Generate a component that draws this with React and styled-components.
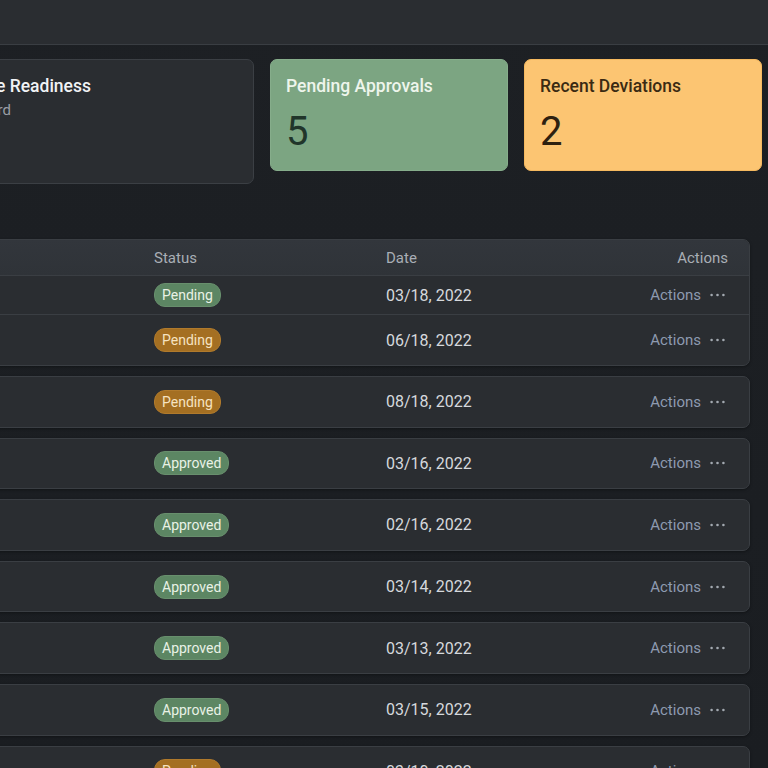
import React from "react";
import styled, { createGlobalStyle } from "styled-components";

const GlobalStyle = createGlobalStyle`
  html, body { margin: 0; padding: 0; }
  body {
    background: #1c1f23;
    font-family: Roboto, "Noto Sans", "Liberation Sans", sans-serif;
    overflow: hidden;
  }
`;

const Viewport = styled.div`
  width: 768px;
  height: 768px;
  overflow: hidden;
  background: linear-gradient(180deg, #1d2024 0%, #1a1d21 100%);
`;

const TopBar = styled.header`
  height: 44px;
  background: #2a2d31;
  border-bottom: 1px solid #3a3e43;
`;

const Main = styled.main`
  padding-top: 14px;
`;

const Cards = styled.section`
  display: grid;
  grid-template-columns: 492px 238px 238px;
  gap: 16px;
  align-items: start;
  margin-left: -238px;
`;

const Card = styled.div`
  box-sizing: border-box;
  border-radius: 7px;
  padding: 14px 15px;
  height: ${(p) => p.$h}px;
  background: ${(p) => p.$bg};
  border: 1px solid ${(p) => p.$border};
  color: ${(p) => p.$fg};
`;

const IntroCard = styled(Card)`
  text-align: right;
  padding-right: 162px;
`;

const CardTitle = styled.div`
  font-size: 17.5px;
  font-weight: 500;
  line-height: 22px;
  margin-top: 1px;
`;

const CardSub = styled.div`
  font-size: 15px;
  line-height: 20px;
  margin-top: 3px;
  margin-right: 80px;
  color: #9a9fa6;
`;

const CardNumber = styled.div`
  font-size: 40px;
  line-height: 44px;
  margin-top: 13px;
  font-weight: 400;
  color: ${(p) => p.$c};
`;

const TableArea = styled.section`
  margin-top: 55px;
  margin-left: -200px;
  width: 950px;
  display: flex;
  flex-direction: column;
  gap: 10px;
`;

const TableCard = styled.div`
  border: 1px solid #3a3e43;
  border-radius: 7px;
  background: #2a2d31;
  overflow: hidden;
  box-shadow: 0 1px 3px rgba(0, 0, 0, 0.35);
`;

const Row = styled.div`
  display: flex;
  align-items: center;
  box-sizing: border-box;
  height: ${(p) => p.$h}px;
  padding: 0 24px 0 16px;
  font-size: 15px;
  color: #d6d9dd;
  border-top: ${(p) => (p.$divider ? "1px solid #3a3e43" : "none")};
`;

const HeadRow = styled(Row)`
  background: linear-gradient(180deg, #32363c 0%, #2f3338 100%);
  color: #a9aeb5;
  padding-right: 21px;
`;

const NameCell = styled.div`
  width: 337px;
  flex: none;
  color: #d6d9dd;
`;

const StatusCell = styled.div`
  width: 232px;
  flex: none;
`;

const DateCell = styled.div`
  flex: 1;
  font-size: ${(p) => (p.$head ? "15px" : "16px")};
`;

const ActionsCell = styled.div`
  display: flex;
  align-items: center;
  gap: 9px;
`;

const ActionLink = styled.span`
  color: #8e9ab0;
`;

const Badge = styled.span`
  display: inline-flex;
  align-items: center;
  height: 22px;
  padding: 0 7px;
  border-radius: 11px;
  font-size: 14px;
  background: ${(p) => (p.$tone === "amber" ? "#a46f22" : "#5c8663")};
  color: ${(p) => (p.$tone === "amber" ? "#f6e3c1" : "#e9f2e6")};
  border: 1px solid ${(p) => (p.$tone === "amber" ? "#b07a2c" : "#688f6d")};
`;

const Dots = () => (
  <svg width="15" height="6" viewBox="0 0 15 6" aria-hidden="true">
    <circle cx="1.6" cy="3" r="1.3" fill="#a3a9b1" />
    <circle cx="7.5" cy="3" r="1.3" fill="#a3a9b1" />
    <circle cx="13.4" cy="3" r="1.3" fill="#a3a9b1" />
  </svg>
);

const rows = [
  { name: "Batch 1042", status: "Pending", tone: "green", date: "03/18, 2022" },
  { name: "Batch 1043", status: "Pending", tone: "amber", date: "06/18, 2022" },
  { name: "Batch 1044", status: "Pending", tone: "amber", date: "08/18, 2022" },
  { name: "Batch 1045", status: "Approved", tone: "green", date: "03/16, 2022" },
  { name: "Batch 1046", status: "Approved", tone: "green", date: "02/16, 2022" },
  { name: "Batch 1047", status: "Approved", tone: "green", date: "03/14, 2022" },
  { name: "Batch 1048", status: "Approved", tone: "green", date: "03/13, 2022" },
  { name: "Batch 1049", status: "Approved", tone: "green", date: "03/15, 2022" },
  { name: "Batch 1050", status: "Pending", tone: "amber", date: "03/10, 2022" },
];

const DataRow = ({ r, h, divider }) => (
  <Row $h={h} $divider={divider}>
    <NameCell>{r.name}</NameCell>
    <StatusCell>
      <Badge $tone={r.tone}>{r.status}</Badge>
    </StatusCell>
    <DateCell>{r.date}</DateCell>
    <ActionsCell>
      <ActionLink>Actions</ActionLink>
      <Dots />
    </ActionsCell>
  </Row>
);

export default function App() {
  return (
    <Viewport>
      <GlobalStyle />
      <TopBar />
      <Main>
        <Cards>
          <IntroCard $h={125} $bg="#2a2d31" $border="#3b3f44" $fg="#f1f3f5">
            <CardTitle>Compliance Readiness</CardTitle>
            <CardSub>Dashboard</CardSub>
          </IntroCard>
          <Card $h={112} $bg="#7ca582" $border="#86ad8b" $fg="#eef5ec">
            <CardTitle>Pending Approvals</CardTitle>
            <CardNumber $c="#21352a">5</CardNumber>
          </Card>
          <Card $h={112} $bg="#fcc572" $border="#f5b95f" $fg="#3a2a12">
            <CardTitle>Recent Deviations</CardTitle>
            <CardNumber $c="#2e2110">2</CardNumber>
          </Card>
        </Cards>
        <TableArea>
          <TableCard>
            <HeadRow $h={35}>
              <NameCell>Item</NameCell>
              <StatusCell>Status</StatusCell>
              <DateCell $head>Date</DateCell>
              <span>Actions</span>
            </HeadRow>
            <DataRow r={rows[0]} h={39} divider />
            <DataRow r={rows[1]} h={51} divider />
          </TableCard>
          {rows.slice(2).map((r) => (
            <TableCard key={r.name}>
              <DataRow r={r} h={49.6} />
            </TableCard>
          ))}
        </TableArea>
      </Main>
    </Viewport>
  );
}
